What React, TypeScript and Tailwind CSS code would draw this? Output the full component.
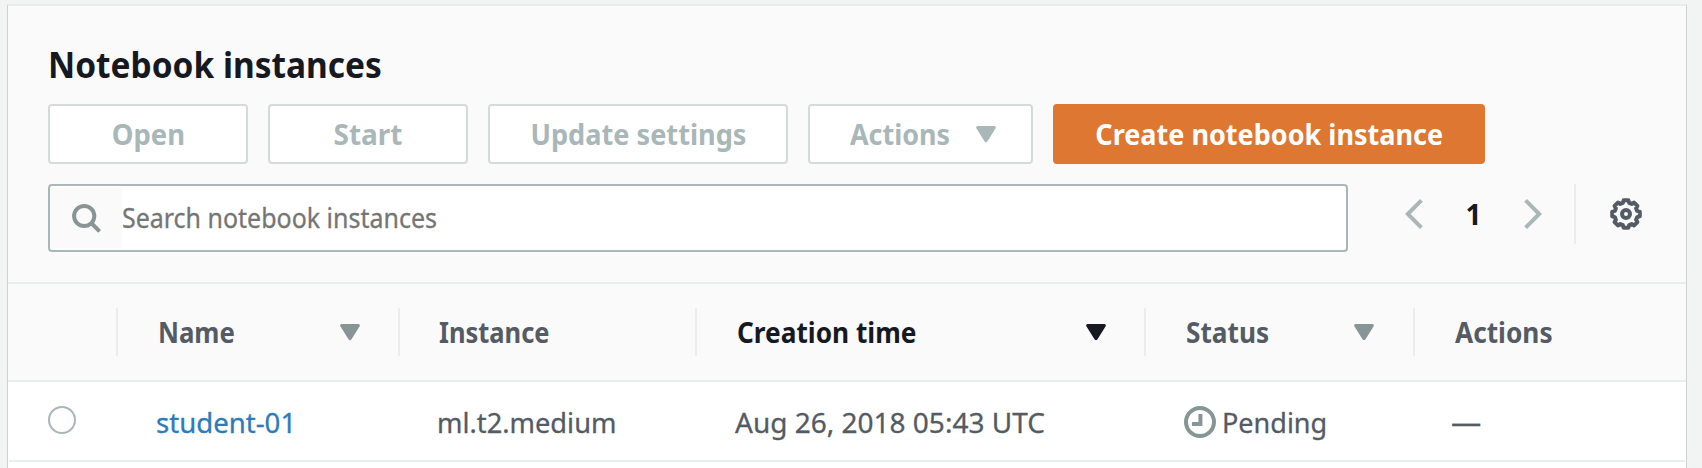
import type { ReactNode } from "react";

function Caret({ className = "" }: { className?: string }) {
  return (
    <svg viewBox="0 0 20 17" className={"h-[17px] w-[20px] shrink-0 " + className} fill="currentColor">
      <path d="M1.6 0H18.4Q20.6 .6 19.5 2.5L11.5 15.2Q10 17.4 8.5 15.2L.5 2.5Q-.6 .6 1.6 0Z" />
    </svg>
  );
}

function SearchIcon() {
  return (
    <svg viewBox="0 0 32 32" className="size-[32px]" fill="none" stroke="#879596" strokeWidth="4">
      <circle cx="14.2" cy="14" r="10.1" />
      <path d="M21.2 21L29.6 29.4" />
    </svg>
  );
}

function Chevron({ flip = false }: { flip?: boolean }) {
  return (
    <svg viewBox="0 0 18 30" className={flip ? "h-[30px] w-[18px] -scale-x-100" : "h-[30px] w-[18px]"} fill="none" stroke="#aab7b8" strokeWidth="4">
      <path d="M16.4 1.4L2.8 15L16.4 28.6" />
    </svg>
  );
}

function gearPath() {
  const pts: string[] = [];
  const teeth = 8;
  for (let i = 0; i < teeth; i++) {
    const mid = (i * 2 * Math.PI) / teeth - Math.PI / 2;
    const corners: [number, number][] = [
      [-0.27, 11.6],
      [-0.17, 14],
      [0.17, 14],
      [0.27, 11.6],
    ];
    for (const [da, r] of corners) {
      pts.push((16 + r * Math.cos(mid + da)).toFixed(2) + " " + (16 + r * Math.sin(mid + da)).toFixed(2));
    }
  }
  return "M" + pts.join("L") + "Z";
}

function Gear() {
  return (
    <svg viewBox="0 0 32 32" className="size-[32px]" fill="none" stroke="#545b64" strokeWidth="4" strokeLinejoin="round">
      <path d={gearPath()} />
      <circle cx="16" cy="16" r="4" />
    </svg>
  );
}

function Clock() {
  return (
    <svg viewBox="0 0 32 32" className="size-[32px] shrink-0" fill="none" stroke="#879596" strokeWidth="4">
      <circle cx="16" cy="16" r="14" />
      <path d="M16.4 8V18H8" />
    </svg>
  );
}

function Button({ className, children }: { className: string; children: ReactNode }) {
  return (
    <button className={"flex h-[60px] items-center justify-center rounded-[4px] border-2 text-[28px] leading-[36px] font-bold " + className}>
      {children}
    </button>
  );
}

const disabled = "border-[#d5dbdb] bg-white text-[#aab7b8]";

function HeadCell({ className, label, scale = "scale-x-[0.937]", children }: { className: string; label: string; scale?: string; children?: ReactNode }) {
  return (
    <div className={"flex h-12 items-center justify-between border-[#eaeded] " + className}>
      <span className={"origin-left " + scale}>{label}</span>
      {children}
    </div>
  );
}

export default function App() {
  return (
    <div className="h-[468px] w-[1702px] overflow-hidden bg-[#f2f3f3] pt-[4px] pl-[7px] font-['Noto_Sans',sans-serif] whitespace-nowrap">
      <main className="flex h-[464px] w-[1680px] flex-col border-x border-t-2 border-x-[#cfd2d2] border-t-[#eaebeb] bg-white">
        <header className="h-[278px] border-b-2 border-[#eaeded] bg-[#fafafa] pt-[39px] pl-[40px]">
          <h1 className="h-[40px] w-fit origin-left scale-x-[0.929] text-[36px] leading-[40px] font-bold text-[#16191f]">
            Notebook instances
          </h1>
          <div className="mt-[19px] flex">
            <Button className={"w-[200px] " + disabled}>
              <span className="scale-x-[0.98]">Open</span>
            </Button>
            <Button className={"ml-5 w-[200px] " + disabled}>Start</Button>
            <Button className={"ml-5 w-[300px] " + disabled}>
              <span className="scale-x-[0.969]">Update settings</span>
            </Button>
            <Button className={"ml-5 w-[225px] pl-[4px] " + disabled}>
              <span className="w-[98px] origin-left scale-x-[0.961]">Actions</span>
              <Caret className="ml-[28px]" />
            </Button>
            <Button className="ml-5 w-[432px] border-[#dd7732] bg-[#dd7732] text-white">
              <span className="scale-x-[0.965]">Create notebook instance</span>
            </Button>
          </div>
          <div className="mt-5 flex items-start">
            <div className="flex h-[68px] w-[1300px] items-center rounded-[4px] border-2 border-[#aab7b8] bg-white">
              <div className="flex h-[60px] w-[72px] items-center bg-[#fafafa] pl-5">
                <SearchIcon />
              </div>
              <span className="origin-left scale-x-[0.925] text-[27px] leading-[36px] text-[#757575] [-webkit-text-stroke:0.3px]">
                Search notebook instances
              </span>
            </div>
            <div className="flex h-[60px] items-center pl-[57px]">
              <Chevron />
              <span className="w-[101px] text-center text-[28px] leading-[36px] font-bold text-[#16191f]">1</span>
              <Chevron flip />
            </div>
            <div className="ml-[32px] flex h-[60px] items-center border-l-2 border-[#eaeded] pl-[34px]">
              <Gear />
            </div>
          </div>
        </header>
        <div className="flex h-[98px] items-center border-b-2 border-[#eaeded] bg-[#fafafa] text-[28px] leading-[36px] font-bold text-[#545b64]">
          <HeadCell className="w-[110px] border-r-2" label="" />
          <HeadCell className="w-[282px] border-r-2 pr-[38px] pl-[40px]" label="Name" scale="scale-x-[0.92]">
            <Caret className="text-[#879596]" />
          </HeadCell>
          <HeadCell className="w-[297px] border-r-2 pl-[39px]" label="Instance" scale="scale-x-[0.91]" />
          <HeadCell className="w-[449px] border-r-2 pr-[38px] pl-[40px] text-[#16191f]" label="Creation time">
            <Caret />
          </HeadCell>
          <HeadCell className="w-[269px] border-r-2 pr-[39px] pl-[40px]" label="Status">
            <Caret className="text-[#879596]" />
          </HeadCell>
          <HeadCell className="pl-[40px]" label="Actions" />
        </div>
        <div className="mx-px flex h-[80px] items-center border-b-2 border-[#eaeded] text-[28px] leading-[36px] text-[#545b64] [-webkit-text-stroke:0.3px]">
          <div className="w-[109px] pl-[39px]">
            <div className="mb-[2px] size-[28px] rounded-full border-2 border-[#aab7b8] bg-white" />
          </div>
          <a className="w-[282px] pt-[2px] pl-[38px] text-[#2e7bbb]">
            <span className="inline-block origin-left scale-x-[0.985]">student-01</span>
          </a>
          <div className="w-[297px] pt-[2px] pl-[37px]">
            <span className="inline-block origin-left scale-x-[0.973]">ml.t2.medium</span>
          </div>
          <div className="w-[449px] pt-[2px] pl-[38px]">Aug 26, 2018 05:43 UTC</div>
          <div className="flex w-[269px] items-center pt-px pl-[38px]">
            <Clock />
            <span className="ml-[6px] origin-left scale-x-[0.965]">Pending</span>
          </div>
          <div className="pl-[36px]">
            <span className="inline-block origin-left scale-x-[1.08]">—</span>
          </div>
        </div>
      </main>
    </div>
  );
}
